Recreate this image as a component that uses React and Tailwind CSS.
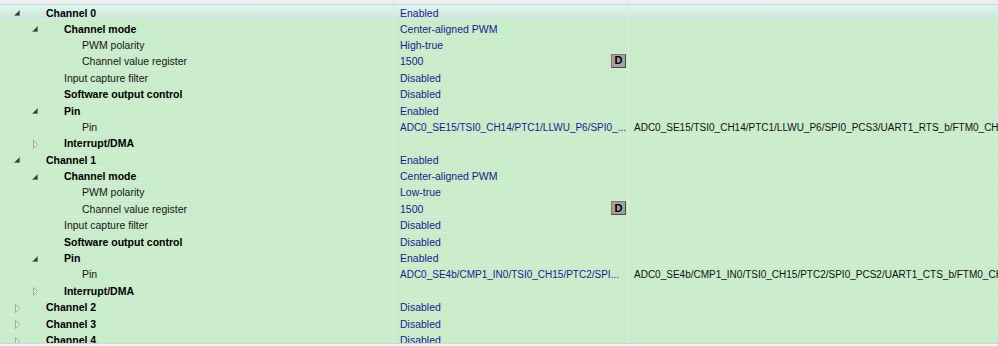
import React from "react";

const rows = [
  { label: "Channel 0", level: 0, bold: true, arrow: "open", value: "Enabled", hover: true },
  { label: "Channel mode", level: 1, bold: true, arrow: "open", value: "Center-aligned PWM" },
  { label: "PWM polarity", level: 2, value: "High-true" },
  { label: "Channel value register", level: 2, value: "1500", d: true },
  { label: "Input capture filter", level: 1, value: "Disabled" },
  { label: "Software output control", level: 1, bold: true, value: "Disabled" },
  { label: "Pin", level: 1, bold: true, arrow: "open", value: "Enabled" },
  {
    label: "Pin",
    level: 2,
    value: "ADC0_SE15/TSI0_CH14/PTC1/LLWU_P6/SPI0_...",
    long: true,
    extra: "ADC0_SE15/TSI0_CH14/PTC1/LLWU_P6/SPI0_PCS3/UART1_RTS_b/FTM0_CH0",
  },
  { label: "Interrupt/DMA", level: 1, bold: true, arrow: "closed", value: "" },
  { label: "Channel 1", level: 0, bold: true, arrow: "open", value: "Enabled" },
  { label: "Channel mode", level: 1, bold: true, arrow: "open", value: "Center-aligned PWM" },
  { label: "PWM polarity", level: 2, value: "Low-true" },
  { label: "Channel value register", level: 2, value: "1500", d: true },
  { label: "Input capture filter", level: 1, value: "Disabled" },
  { label: "Software output control", level: 1, bold: true, value: "Disabled" },
  { label: "Pin", level: 1, bold: true, arrow: "open", value: "Enabled" },
  {
    label: "Pin",
    level: 2,
    value: "ADC0_SE4b/CMP1_IN0/TSI0_CH15/PTC2/SPI...",
    long: true,
    extra: "ADC0_SE4b/CMP1_IN0/TSI0_CH15/PTC2/SPI0_PCS2/UART1_CTS_b/FTM0_CH1",
  },
  { label: "Interrupt/DMA", level: 1, bold: true, arrow: "closed", value: "" },
  { label: "Channel 2", level: 0, bold: true, arrow: "closed", value: "Disabled" },
  { label: "Channel 3", level: 0, bold: true, arrow: "closed", value: "Disabled" },
  { label: "Channel 4", level: 0, bold: true, arrow: "closed", value: "Disabled" },
];

const indent = ["pl-0", "pl-[18px]", "pl-[36px]"];

function Arrow({ kind }) {
  if (kind === "open") {
    return (
      <svg width="6" height="6" viewBox="0 0 6 6" className="ml-[14px]">
        <polygon points="5.5,0.5 5.5,5.5 0.5,5.5" fill="#3a3a3a" stroke="#6a6a6a" strokeWidth="0.6" />
      </svg>
    );
  }
  if (kind === "closed") {
    return (
      <svg width="6" height="9" viewBox="0 0 6 9" className="ml-[15px] mt-[1px]">
        <polygon points="0.5,0.5 4.5,4.5 0.5,8.5" fill="#f4f4f4" fillOpacity="0.3" stroke="#a8a8a8" strokeWidth="1" />
      </svg>
    );
  }
  return null;
}

function Row({ r }) {
  const base = r.hover
    ? "border-t border-t-[#b8dbee] bg-linear-to-b from-[#e3f5ee] to-[#c8e8d9]"
    : "";
  return (
    <div
      className={`grid grid-cols-[394px_235px_1fr] h-[16.4px] shrink-0 border-b border-[#dde8dd] ${base}`}
    >
      <div className="border-r border-[#e2e9e2] flex items-center pt-[2px] overflow-hidden">
        <div className={`flex items-center ${indent[r.level]}`}>
          <span className="w-[46px] shrink-0 flex items-center">
            <Arrow kind={r.arrow} />
          </span>
          <span
            className={`whitespace-nowrap leading-[13px] ${
              r.bold ? "font-bold text-black" : "text-[#161616]"
            }`}
          >
            {r.label}
          </span>
        </div>
      </div>
      <div className="border-r border-[#e2e9e2] flex items-center pt-[2px] pl-[6px] pr-[2px] overflow-hidden">
        <span
          className={`whitespace-nowrap leading-[13px] text-[#1b1b8e] flex-1 ${
            r.long ? "text-[10px]" : ""
          }`}
        >
          {r.value}
        </span>
        {r.d && (
          <span className="w-[15px] h-[14px] -mt-[2px] shrink-0 flex items-center justify-center bg-[#a2a2a2] border border-[#4a4a4a] border-t-[#7a7a7a] border-l-[#7a7a7a] font-bold text-[11px] leading-none text-black">
            D
          </span>
        )}
      </div>
      <div className="flex items-center pt-[2px] pl-[5px] overflow-hidden">
        <span className="whitespace-nowrap leading-[13px] text-[10px] text-[#111]">{r.extra}</span>
      </div>
    </div>
  );
}

export default function App() {
  return (
    <div className="w-[998px] h-[346px] overflow-hidden flex flex-col bg-[#c9ecca] font-['Liberation_Sans',Arial,sans-serif] text-[10.5px]">
      <div className="grid grid-cols-[394px_235px_1fr] h-[4px] shrink-0 bg-[#eeeeee]">
        <div className="border-r border-[#dedede]" />
        <div className="border-r border-[#dedede]" />
        <div />
      </div>
      <div className="flex-1 flex flex-col overflow-hidden">
        {rows.map((r, i) => (
          <Row key={i} r={r} />
        ))}
      </div>
      <div className="h-[3px] shrink-0 bg-[#f3f3f3] border-t border-[#d4d4d4]" />
    </div>
  );
}
